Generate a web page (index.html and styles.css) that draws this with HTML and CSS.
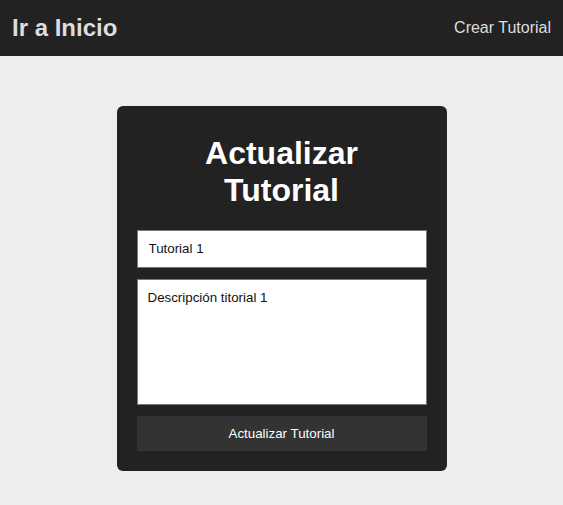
FILE: index.html
```html
<!DOCTYPE html>
<html lang="es">
<head>
<meta charset="utf-8">
<title>Actualizar Tutorial</title>
<link rel="stylesheet" href="styles.css">
</head>
<body>
<header class="navbar">
  <a class="brand" href="#">Ir a Inicio</a>
  <a class="nav-link" href="#">Crear Tutorial</a>
</header>
<main class="content">
  <form class="card">
    <h1 class="card-title">Actualizar Tutorial</h1>
    <input class="field" type="text" value="Tutorial 1">
    <textarea class="field field-area">Descripción titorial 1</textarea>
    <button class="btn" type="button">Actualizar Tutorial</button>
  </form>
</main>
</body>
</html>
```

FILE: styles.css
```css
* { box-sizing: border-box; }
html, body { margin: 0; padding: 0; }
body {
  background: #ededed;
  font-family: "Liberation Sans", Arial, sans-serif;
  min-height: 505px;
}
.navbar {
  height: 56px;
  background: #222;
  display: flex;
  align-items: center;
  justify-content: space-between;
  padding: 0 12px;
}
.brand {
  color: #ddd;
  font-weight: bold;
  font-size: 24px;
  text-decoration: none;
}
.nav-link {
  color: #ddd;
  font-size: 16px;
  text-decoration: none;
}
.content {
  display: flex;
  justify-content: center;
  padding-top: 50px;
}
.card {
  width: 330px;
  background: #222;
  border-radius: 6px;
  padding: 29px 20px 20px;
  display: flex;
  flex-direction: column;
}
.card-title {
  color: #fff;
  font-size: 32px;
  font-weight: bold;
  text-align: center;
  margin: 0 0 21px;
  padding: 0 40px;
  line-height: 36.8px;
}
.field {
  width: 100%;
  border: 1px solid #777;
  background: #fff;
  color: #111;
  font-family: "Liberation Sans", Arial, sans-serif;
  font-size: 13.33px;
  padding: 0 11px;
  height: 38px;
  margin: 0 0 11px;
  outline: none;
}
.field-area {
  height: 126px;
  padding: 10px 10px;
  resize: none;
}
.btn {
  height: 35px;
  background: #333;
  color: #fff;
  border: none;
  font-family: "Liberation Sans", Arial, sans-serif;
  font-size: 13.33px;
  cursor: pointer;
}
```
